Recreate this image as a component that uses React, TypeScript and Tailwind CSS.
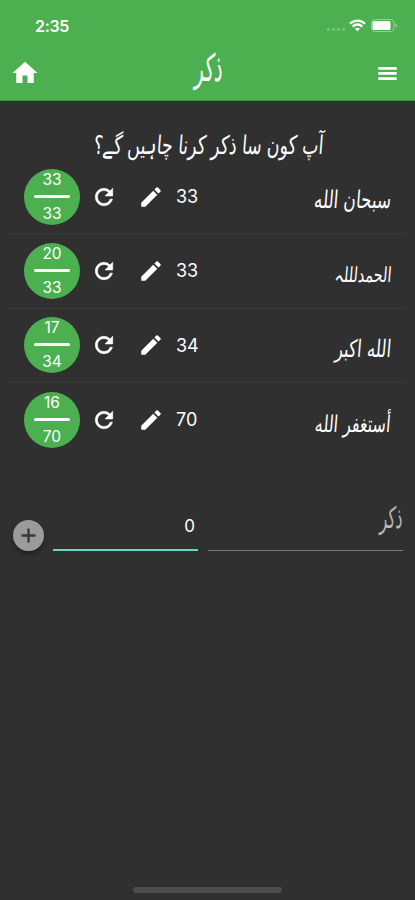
import { MdEdit, MdHome } from 'react-icons/md'

const urdu = "font-['DejaVu_Sans_Condensed','DejaVu_Sans',sans-serif]"

const items = [
  { name: 'سبحان الله', done: 33, total: 33, size: 'text-[18.7px]' },
  { name: 'الحمدلللہ', done: 20, total: 33, size: 'text-[16px]' },
  { name: 'الله اكبر', done: 17, total: 34, size: 'text-[18.5px]' },
  { name: 'أستغفر الله', done: 16, total: 70, size: 'text-[17.8px]' },
]

function StatusBar() {
  return (
    <div className="flex h-[52px] items-center justify-between pl-[35px] pr-[17px]">
      <span className="text-[16px] font-semibold tracking-[-0.3px]">2:35</span>
      <div className="flex items-center">
        <div className="mt-[7px] mr-[4px] flex gap-[2px]">
          {[0, 1, 2, 3].map((i) => (
            <span key={i} className="size-[3px] rounded-[1px] bg-white/25" />
          ))}
        </div>
        <svg className="-mt-[2px]" width="17" height="13" viewBox="0 0 17 13" fill="none" stroke="white" strokeWidth="2.3">
          <path d="M1 4.8C5 .5 12 .5 16 4.8M3.7 7.6C6.4 4.8 10.6 4.8 13.3 7.6" />
          <path d="M6 9.6C7.4 8.3 9.6 8.3 11 9.6L8.5 12.4z" fill="white" stroke="none" />
        </svg>
        <svg className="-mt-[2px] ml-[5px]" width="27" height="13" viewBox="0 0 27 13" fill="none">
          <rect x=".5" y=".5" width="22.5" height="12" rx="3.5" stroke="white" strokeOpacity=".4" />
          <rect x="1.5" y="2" width="18" height="9" rx="1.5" fill="white" />
          <path d="M24.5 4.5c2 .6 2 3.4 0 4z" fill="white" fillOpacity=".45" />
        </svg>
      </div>
    </div>
  )
}

function RefreshIcon() {
  return (
    <svg className="ml-[11px] shrink-0" width="26" height="26" viewBox="0 0 24 24" fill="currentColor" stroke="currentColor" strokeWidth="0.6">
      <path d="M17.65 6.35A7.958 7.958 0 0012 4c-4.42 0-7.99 3.58-7.99 8s3.57 8 7.99 8c3.73 0 6.84-2.55 7.73-6h-2.08A5.99 5.99 0 0112 18c-3.31 0-6-2.69-6-6s2.69-6 6-6c1.66 0 3.14.69 4.22 1.78L13 11h7V4l-2.35 2.35z" />
    </svg>
  )
}

function MenuIcon() {
  return (
    <svg width="25" height="25" viewBox="0 0 25 25" fill="currentColor">
      <path d="M3.3 5.9h18.4v2.8H3.3zM3.3 11h18.4v2.8H3.3zM3.3 16.2h18.4V19H3.3z" />
    </svg>
  )
}

export default function App() {
  return (
    <div className="flex h-[900px] w-[415px] flex-col overflow-hidden bg-[#303030] font-['Inter',sans-serif] text-white">
      <header className="h-[101px] shrink-0 border-b border-[#3f8f42] bg-[#4caf50]">
        <StatusBar />
        <div className="flex h-[42px] items-center justify-between pl-[9.5px] pr-[15px]">
          <MdHome size={30} />
          <h1 dir="rtl" className={`${urdu} -mt-[8px] pl-[4px] text-[21px] leading-none`}>
            <span className="inline-block -skew-x-6 scale-y-[1.8]">ذكر</span>
          </h1>
          <MenuIcon />
        </div>
      </header>

      <h2 dir="rtl" className={`${urdu} flex h-[59px] items-center justify-center pt-[31px] pl-[3px] text-[19.1px] leading-none whitespace-nowrap`}>
        <span className="inline-block -skew-x-6 scale-y-[1.35]">آپ کون سا ذکر کرنا چاہیں گے؟</span>
      </h2>

      <ul className="px-2">
        {items.map((item) => (
          <li key={item.name} className="flex h-[74.3px] items-center border-b border-[#3a3a3a] pl-4 pr-4 last:border-transparent">
            <div className="flex size-[56px] shrink-0 flex-col items-center justify-between rounded-full bg-[#4caf50] pt-[3px] pb-[4px] text-[15.5px] leading-[15px]">
              <span>{item.done}</span>
              <span className="h-[3px] w-[36px] rounded-full bg-white" />
              <span>{item.total}</span>
            </div>
            <RefreshIcon />
            <MdEdit className="ml-[21px]" size={26} />
            <span className="ml-[12px] text-[18px]">{item.total}</span>
            <span dir="rtl" className={`${urdu} ${item.size} mt-[8px] ml-auto inline-block -skew-x-6 scale-y-[1.3] leading-none whitespace-nowrap`}>
              {item.name}
            </span>
          </li>
        ))}
      </ul>

      <div className="mt-[44px] flex h-[50px] items-end pl-[13px] pr-3">
        <div className="flex size-[31px] shrink-0 items-center justify-center rounded-full bg-[#9b9b9b] shadow-md shadow-black/30">
          <svg width="15" height="15" viewBox="0 0 15 15" stroke="#3a3a3a" strokeWidth="2.4">
            <path d="M7.5 .5v14M.5 7.5h14" />
          </svg>
        </div>
        <div className="ml-[9px] flex h-[50px] w-[145px] items-center justify-end border-b-2 border-[#64d8c0] pt-[4px] pr-[3px] text-[17px]">
          0
        </div>
        <div dir="rtl" className={`${urdu} ml-[10px] flex h-[50px] flex-1 items-center border-b border-[#7a7a7a] pb-[14px] text-[17px] leading-none text-[#b8b8b8]`}>
          <span className="inline-block -skew-x-6 scale-y-[1.75]">ذكر</span>
        </div>
      </div>

      <div className="mx-auto mt-auto mb-[7px] h-[6px] w-[149px] rounded-full bg-[#4c4c4c]" />
    </div>
  )
}
